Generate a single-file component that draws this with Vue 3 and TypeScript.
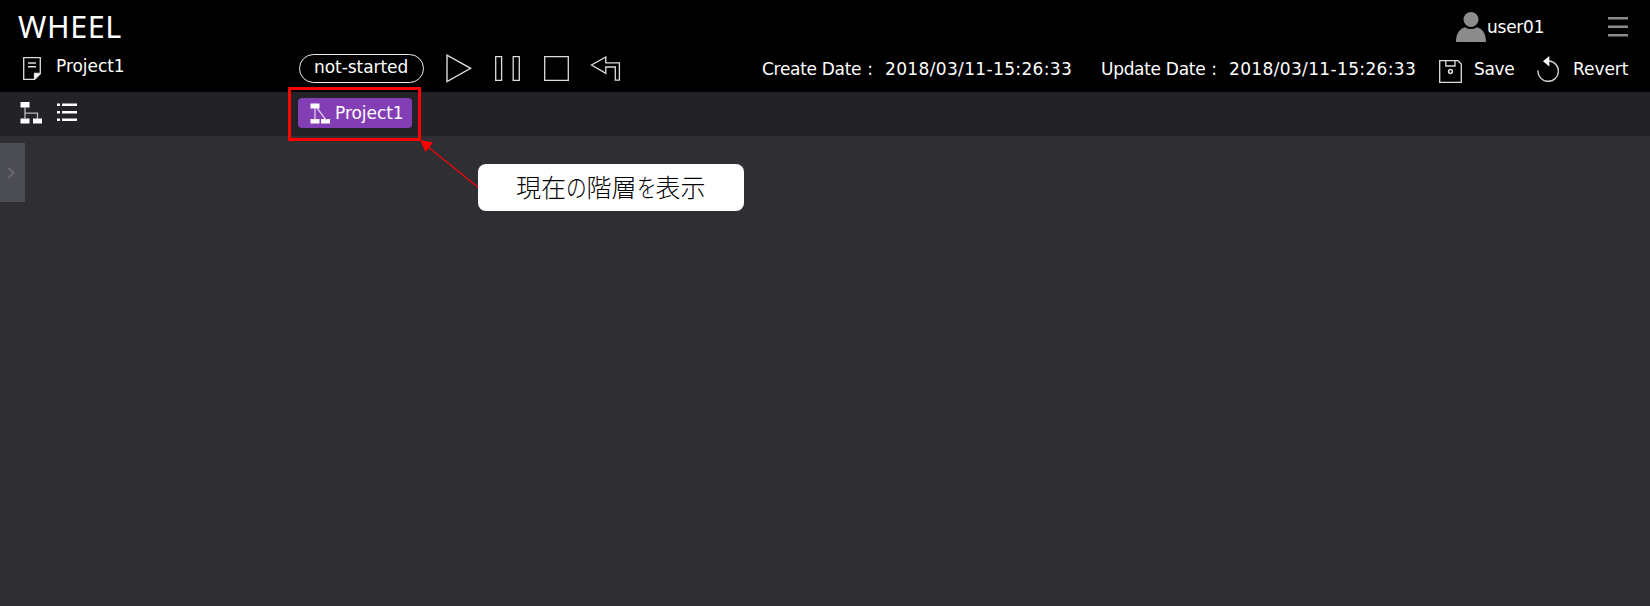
<script setup lang="ts">
interface DateField {
  label: string
  value: string
  kind: string
}

const projectName = 'Project1'
const status = 'not-started'
const user = 'user01'
const dates: DateField[] = [
  { label: 'Create Date', value: '2018/03/11-15:26:33', kind: 'created' },
  { label: 'Update Date', value: '2018/03/11-15:26:33', kind: 'updated' },
]
</script>

<template>
  <div class="app">
    <header class="header">
      <div class="brand-row">
        <h1 class="brand">WHEEL</h1>
        <div class="user">
          <svg width="30" height="30" viewBox="0 0 30 30" fill="#8c8c8c">
            <circle cx="15" cy="7.5" r="7.5" />
            <path d="M0 30C0 21 4 16.5 9 15.2Q15 19 21 15.2C26 16.5 30 21 30 30Z" />
          </svg>
          <span class="user-name">{{ user }}</span>
        </div>
        <svg class="menu" width="20" height="20" viewBox="0 0 20 20" fill="#8c8c8c">
          <path d="M0 0H20V2.5H0ZM0 8.5H20V11H0ZM0 17H20V19.5H0Z" />
        </svg>
      </div>
      <div class="project-row">
        <svg class="doc" width="18" height="23" viewBox="0 0 18 23" fill="none" stroke="#ddd" stroke-width="1.3">
          <path d="M.7 .7H17.3V16.5L11.5 22.3H.7Z" />
          <path d="M11.5 22.3V16.5H17.3Z" fill="#fff" />
          <path d="M5 6H13M5 9.8H13" stroke-width="1.5" />
        </svg>
        <span class="project-name">{{ projectName }}</span>
        <span class="status"><span>{{ status }}</span></span>
        <svg class="play" width="26" height="29" viewBox="0 0 26 29" fill="none" stroke="#ddd" stroke-width="1.4">
          <path d="M1 1.2V27.5L24.6 14.3Z" />
        </svg>
        <svg class="pause" width="25" height="25" viewBox="0 0 25 25" fill="none" stroke="#ddd" stroke-width="1.3">
          <path d="M.7 .7H6.6V24.3H.7ZM18.2 .7H24.3V24.3H18.2Z" />
        </svg>
        <svg class="stop" width="25" height="25" viewBox="0 0 25 25" fill="none" stroke="#ddd" stroke-width="1.3">
          <path d="M.7 .7H24.3V24.3H.7Z" />
        </svg>
        <svg class="back" width="31" height="25" viewBox="0 0 31 25" fill="none" stroke="#ddd" stroke-width="1.3">
          <path d="M1.5 9L15.8 1V6.8H29.4V24.2H25.3V11H15.8V17.3Z" />
        </svg>
        <div class="dates">
          <div v-for="d in dates" :key="d.kind" class="date" :class="d.kind">
            <span class="date-label">{{ d.label }}<span class="colon">:</span></span>
            <span class="date-value">{{ d.value }}</span>
          </div>
        </div>
        <svg class="save-icon" width="23" height="23" viewBox="0 0 23 23" fill="none" stroke="#ddd" stroke-width="1.3">
          <path d="M.7 .7H19L22.3 4V22.3H.7Z" />
          <path d="M6.8 .7V6H16V.7" />
          <circle cx="11.5" cy="11.5" r="1.9" stroke-width="1.5" />
        </svg>
        <span class="save">Save</span>
        <svg class="revert-icon" width="22" height="26" viewBox="0 0 22 26" fill="none" stroke="#ccc" stroke-width="1.5">
          <path d="M1 14.5A10.2 10.2 0 1 0 12 5" />
          <path d="M6 5.3L12.3 0V10.6Z" fill="#fff" stroke="none" />
        </svg>
        <span class="revert">Revert</span>
      </div>
    </header>

    <nav class="toolbar">
      <svg class="tree" width="22" height="22" viewBox="0 0 22 22" fill="#fff">
        <path d="M.5 0H9.5V5.5H.5ZM.5 16.5H9.5V21.5H.5ZM13 16.5H22V21.5H13Z" />
        <path d="M5 5V17M5 11.2H17.5V17" fill="none" stroke="#bbb" stroke-width="1.3" />
      </svg>
      <svg class="list" width="21" height="19" viewBox="0 0 21 19" fill="#fff">
        <path d="M0 .5H3V3H0ZM5 .5H20V3H5ZM0 8H3V10.5H0ZM5 8H20V10.5H5ZM0 15.5H3V18H0ZM5 15.5H20V18H5Z" />
      </svg>
      <div class="highlight">
        <div class="crumb">
          <svg width="21" height="21" viewBox="0 0 21 21" fill="#fff">
            <path d="M.5 .5H9.5V5.5H.5ZM.5 16H9.5V20.5H.5ZM11 16H20V20.5H11Z" />
            <path d="M5 5V17M7 5L16 17" fill="none" stroke="#dcc8ec" stroke-width="1.3" />
          </svg>
          <span class="crumb-name">{{ projectName }}</span>
        </div>
      </div>
    </nav>

    <main class="canvas">
      <button class="drawer" type="button">
        <svg width="8" height="12" viewBox="0 0 8 12" fill="none" stroke="#6b6b6e" stroke-width="1.8">
          <path d="M1.5 1L6.5 6L1.5 11" />
        </svg>
      </button>
      <svg class="arrow" width="60" height="52" viewBox="0 0 60 52">
        <path d="M8 7L59 48" stroke="#f00" stroke-width="1.1" />
        <path d="M0 0L13 2.5L5.5 12Z" fill="#f00" />
      </svg>
      <div class="callout">
        <span>現在</span><span class="kana no">の</span><span>階層</span><span class="kana wo">を</span><span>表示</span>
      </div>
    </main>
  </div>
</template>

<style>
body {
  background: #2f2e33;
  overflow: hidden;
}
</style>

<style scoped>
.app {
  width: 1650px;
  height: 606px;
  background: #2f2e33;
  color: #fff;
  font: 17px/20px "DejaVu Sans", "Noto Sans CJK JP", sans-serif;
  letter-spacing: -0.05px;
  white-space: nowrap;
  overflow: hidden;
}
svg {
  display: block;
  flex: none;
}
.header {
  height: 92px;
  background: #000;
}
.brand-row {
  display: flex;
  height: 54px;
}
.brand {
  flex: none;
  width: 1438px;
  margin: 6px 0 0 18px;
  font: 400 30.5px/40px "Noto Sans", sans-serif;
  letter-spacing: 0.6px;
}
.user {
  display: flex;
  width: 152px;
  margin-top: 12px;
}
.user-name {
  margin: 5px 0 0 1px;
  letter-spacing: -0.25px;
}
.menu {
  margin-top: 17px;
}
.project-row {
  display: flex;
  height: 38px;
}
.project-row > * {
  flex: none;
}
.doc {
  margin: 3px 0 0 23px;
}
.project-name {
  width: 243px;
  margin: 2px 0 0 15px;
}
.status {
  box-sizing: border-box;
  width: 125px;
  height: 29px;
  border: 1.4px solid #eee;
  border-radius: 15px;
  padding: 2px 0 0 14px;
}
.play {
  margin-left: 22px;
}
.pause {
  margin: 2px 0 0 23px;
}
.stop {
  margin: 2px 0 0 24px;
}
.back {
  margin: 2px 0 0 21px;
}
.dates {
  display: flex;
  width: 678px;
  margin: 5px 0 0 141px;
}
.date {
  display: flex;
  width: 340px;
}
.date-label {
  width: 123px;
  letter-spacing: -0.3px;
}
.updated .date-label {
  width: 128px;
}
.colon {
  margin-left: 6px;
}
.date-value {
  letter-spacing: 0.35px;
}
.save-icon {
  margin: 6px 0 0 -1px;
}
.save {
  width: 63px;
  margin: 5px 0 0 12px;
  letter-spacing: -0.3px;
}
.revert-icon {
  margin-top: 2px;
}
.revert {
  margin: 5px 0 0 14px;
}
.toolbar {
  display: flex;
  height: 44px;
  background: #232227;
}
.tree {
  margin: 10px 0 0 20px;
}
.list {
  margin: 11px 0 0 15px;
}
.highlight {
  box-sizing: border-box;
  flex: none;
  position: relative;
  z-index: 1;
  width: 133px;
  height: 54px;
  margin: -5px 0 0 210px;
  padding: 8px 7px;
  border: 3px solid #f00;
}
.crumb {
  box-sizing: border-box;
  display: flex;
  width: 114px;
  height: 30px;
  padding: 5px 0 0 12px;
  border-radius: 4px;
  background: #843eb5;
}
.crumb-name {
  margin: 0 0 0 4px;
}
.canvas {
  position: relative;
  height: 470px;
}
.drawer {
  position: absolute;
  top: 7px;
  left: 0;
  display: flex;
  align-items: center;
  width: 25px;
  height: 59px;
  padding: 0 0 0 7px;
  border: 0;
  background: #4c4c54;
}
.arrow {
  position: absolute;
  top: 4px;
  left: 420px;
}
.callout {
  position: absolute;
  top: 28px;
  left: 478px;
  box-sizing: border-box;
  display: flex;
  width: 266px;
  height: 47px;
  padding-left: 38px;
  border-radius: 8px;
  background: #fff;
  color: #000;
  font: 300 25px/45px "Noto Sans CJK JP", sans-serif;
  letter-spacing: 0;
}
.kana {
  transform-origin: 0 50%;
  transform: scaleX(0.83);
}
.no {
  width: 20.5px;
}
.wo {
  width: 19px;
  transform: scaleX(0.78);
}
</style>
